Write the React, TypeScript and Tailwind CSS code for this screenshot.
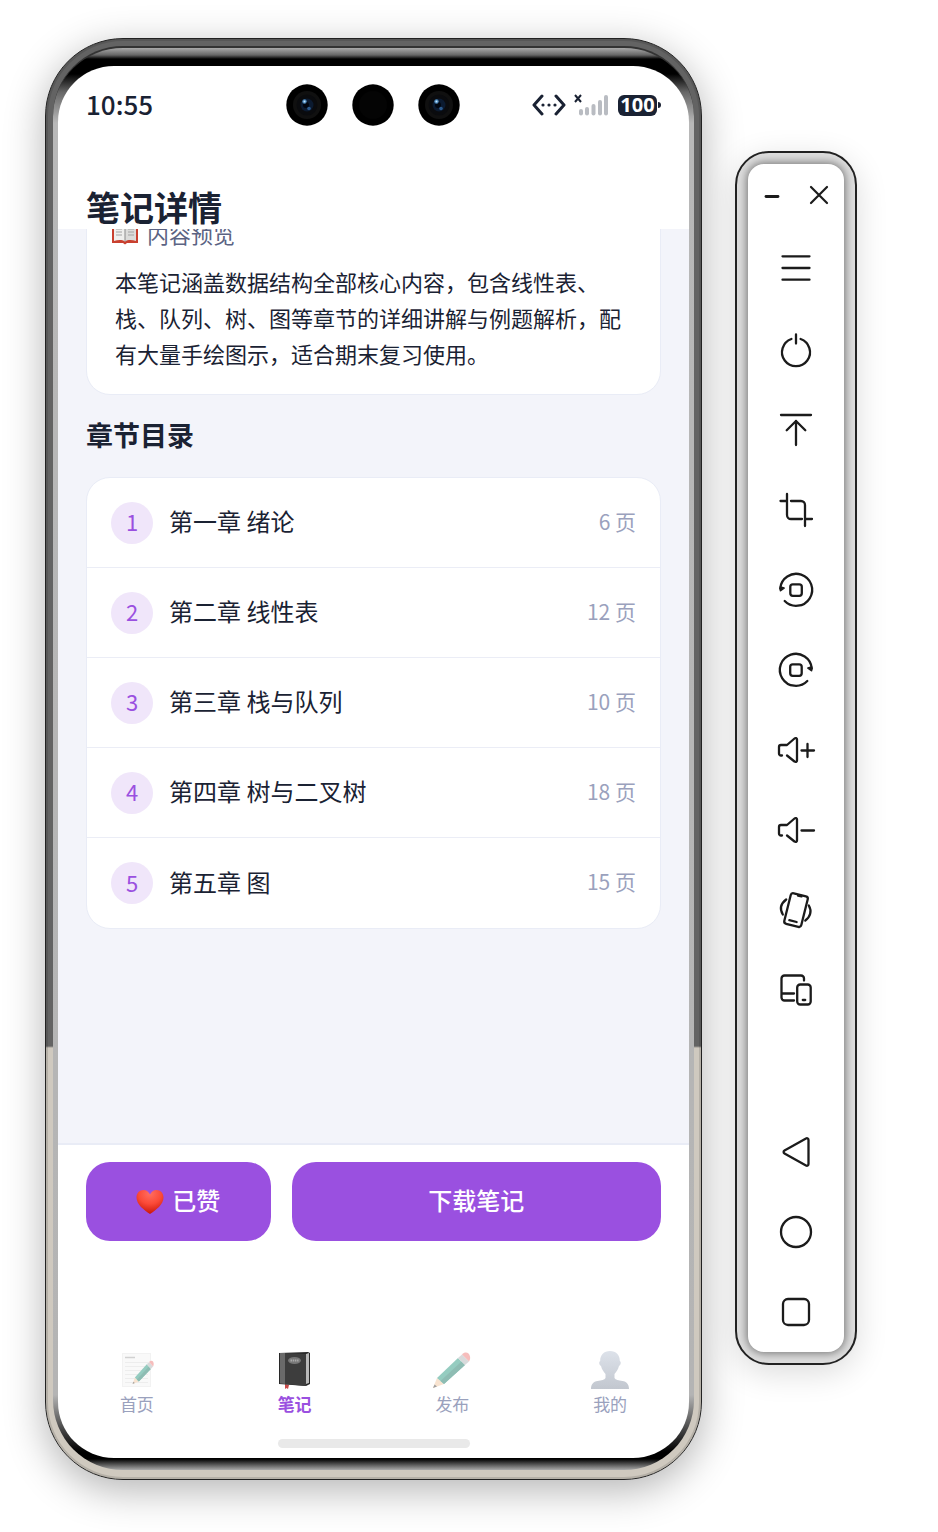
import React from "react";

const chapters = [
  { title: "第一章 绪论", pages: 6 },
  { title: "第二章 线性表", pages: 12 },
  { title: "第三章 栈与队列", pages: 10 },
  { title: "第四章 树与二叉树", pages: 18 },
  { title: "第五章 图", pages: 15 },
];

function Camera({ lens }: { lens?: boolean }) {
  return (
    <svg width="42" height="42" viewBox="0 0 42 42" aria-hidden="true">
      <circle cx="21" cy="21" r="20.7" fill="#000" />
      <circle cx="21" cy="21" r="14" fill={lens ? "#101010" : "#040404"} />
      {lens && (
        <>
          <circle cx="21" cy="21" r="10.5" fill="#0a0b0e" />
          <circle cx="21" cy="21" r="6.5" fill="#0b1a30" />
          <circle cx="20" cy="21" r="3" fill="#02060f" />
          <circle cx="18.5" cy="17.5" r="2.2" fill="#4a86b8" />
          <circle cx="18.5" cy="17.5" r="1" fill="#c4e6ff" />
          <circle cx="23" cy="24.5" r="1.8" fill="#2b5a8e" />
        </>
      )}
    </svg>
  );
}

function StatusIcons() {
  return (
    <div className="flex items-center">
      <svg width="34" height="22" viewBox="0 0 34 22" aria-hidden="true">
        <path
          d="M10 2 2 11l8 9M24 2l8 9-8 9"
          fill="none"
          stroke="#1a2233"
          strokeWidth="3"
          strokeLinecap="round"
          strokeLinejoin="round"
        />
        <circle cx="11" cy="11" r="1.6" fill="#1a2233" />
        <circle cx="17" cy="11" r="1.6" fill="#1a2233" />
        <circle cx="23" cy="11" r="1.6" fill="#1a2233" />
      </svg>
      <svg
        width="36"
        height="22"
        viewBox="0 0 36 22"
        className="ml-2"
        aria-hidden="true"
      >
        <path d="m1 1 6 7M7 1 1 8" stroke="#1a2233" strokeWidth="2" />
        <g fill="#b9bcc2">
          <rect x="5" y="15" width="4" height="6.5" rx="2" />
          <rect x="11" y="13" width="4" height="8.5" rx="2" />
          <rect x="17.5" y="10" width="4" height="11.5" rx="2" />
          <rect x="24" y="6" width="4" height="15.5" rx="2" />
          <rect x="30" y="1" width="4" height="20.5" rx="2" />
        </g>
      </svg>
      <span className="ml-2 flex h-[21px] w-[39px] items-center justify-center rounded-md bg-[#1a2233] font-['Noto_Sans'] text-xl leading-none font-bold text-white">
        100
      </span>
      <span className="ml-px h-1.5 w-[3px] rounded-r-full bg-[#1a2233]" />
    </div>
  );
}

function BookIcon() {
  return (
    <svg width="28" height="24" viewBox="0 0 28 24" aria-hidden="true">
      <path d="M1 3h26v19H16l-2 1.5-2-1.5H1z" fill="#c9402f" />
      <path d="M3 1c4-.8 8-.5 11 1.5v18C11 18.500 7 18.800 3 20z" fill="#efefed" />
      <path d="M25 1c-4-.8-8-.5-11 1.5v18c3-2 7-1.700 11-.5z" fill="#dcdcda" />
      <path
        d="M5 5h6M5 8h6M5 11h6M5 14h6M17 5h6M17 8h6M17 11h6M17 14h6"
        stroke="#a3a3a3"
        strokeWidth="1.2"
      />
      <path d="M14 2.500v18" stroke="#8b8b8b" />
    </svg>
  );
}

function HeartIcon() {
  return (
    <svg width="28" height="26" viewBox="0 0 28 26" aria-hidden="true">
      <defs>
        <radialGradient id="heart" cx="50%" cy="15%" r="85%">
          <stop offset="0" stopColor="#ff6e60" />
          <stop offset=".5" stopColor="#fb4a38" />
          <stop offset="1" stopColor="#c9160a" />
        </radialGradient>
      </defs>
      <path
        d="M14 25C8 21 .5 15.500.5 8.500.5 4 3.500 1 7.500 1c3 0 5.300 1.800 6.500 4.500C15.200 2.800 17.500 1 20.500 1c4 0 7 3 7 7.500 0 7-7.500 12.500-13.500 16.500z"
        fill="url(#heart)"
      />
    </svg>
  );
}

function Pencil() {
  return (
    <g>
      <path d="M1 38 5 28l7 6z" fill="#f3c9a2" />
      <path d="m1 38 1.500-3.500L5 36.500z" fill="#444" />
      <path d="M5 28 26 8l7 7-21 19z" fill="#2d9a83" />
      <path d="m8.500 31 21-19.500L33 15 12 34z" fill="#1f7c69" />
      <path d="m26 8 4-3.500 7 7L33 15z" fill="#b3b7b9" />
      <path d="M30 4.500c2-2.500 5-2.500 6.500-1S39 8.500 37 11.500z" fill="#ee7e7c" />
    </g>
  );
}

function HomeIcon() {
  return (
    <svg width="40" height="40" viewBox="0 0 40 40" className="opacity-50">
      <rect x="5.5" y="3.5" width="28" height="33" fill="#f4f4f4" stroke="#e6e6e6" />
      <path d="M8 7.500h10" stroke="#a5a5a5" strokeWidth="1.5" />
      <path
        d="M8 12.500h23M8 16.500h23M8 20.500h23M8 24.500h23M8 28.500h23M8 32.500h23"
        stroke="#dcdcdc"
      />
      <g transform="translate(15 9) scale(.57 .66)">
        <Pencil />
      </g>
    </svg>
  );
}

function NotesIcon() {
  return (
    <svg width="40" height="40" viewBox="0 0 40 40">
      <path d="m10 34 4 1-1 4-1.500-1-1.500 1z" fill="#c94a49" />
      <path d="M4 3 33 2l2 1v31l-4 2-27-2z" fill="#282828" />
      <path d="m31 4 3-1v30l-3 1z" fill="#b9b9b9" />
      <path d="M5 3h5v31l-5-.5z" fill="#6a6a6a" />
      <path d="m10 3 21 1v32l-21-2z" fill="#3d3d3d" />
      <ellipse cx="19.5" cy="10.5" rx="6.5" ry="3.5" fill="#777" />
      <path d="M15.500 10.500h8" stroke="#aaa" strokeWidth="2" strokeDasharray="1.500 .7" />
    </svg>
  );
}

function PublishIcon() {
  return (
    <svg width="40" height="40" viewBox="0 0 40 40" className="opacity-50">
      <Pencil />
    </svg>
  );
}

function ProfileIcon() {
  return (
    <svg width="40" height="40" viewBox="0 0 40 40">
      <defs>
        <linearGradient id="person" x1="0" y1="0" x2="0" y2="1">
          <stop offset="0" stopColor="#dde2ea" />
          <stop offset="1" stopColor="#c2c7cf" />
        </linearGradient>
      </defs>
      <path
        d="M20 1c6 0 10 4 9.800 10 1.700 1 1 4-.8 5-1 4-3 6-4.500 8v4c1 2 4 2.500 8 3 4 .7 6.500 3 6.500 8H1c0-5 2.500-7.300 6.500-8 4-.5 7-1 8-3v-4c-1.500-2-3.500-4-4.500-8-1.800-1-2.500-4-.8-5C10 5 14 1 20 1z"
        fill="url(#person)"
      />
    </svg>
  );
}

const tabs = [
  { label: "首页", Icon: HomeIcon },
  { label: "笔记", Icon: NotesIcon, active: true },
  { label: "发布", Icon: PublishIcon },
  { label: "我的", Icon: ProfileIcon },
];

const rotateShape = (
  <>
    <path d="M8.700 31A16 16 0 1 0 4.200 18.500" />
    <path d="M4.500 17v3.500l3.500-2.500z" fill="currentColor" strokeWidth="1.800" />
    <rect x="14.3" y="14.3" width="11.5" height="11.5" rx="2.5" />
  </>
);

const speakerShape = (
  <path d="M6 25.500H5a2 2 0 0 1-2-2V17a2 2 0 0 1 2-2h6l7.500-6.500c1-.9 2.500-.3 2.500 1v21c0 1.300-1.500 1.900-2.500 1l-7.500-6" />
);

const deviceActions = [
  { label: "菜单", shape: <path d="M6.500 6.300h27M6.500 18h27M6.500 29.700h27" /> },
  {
    label: "电源",
    shape: <path d="M15.400 9A14 14 0 1 0 24.600 9M20 4.500V13.500" />,
  },
  {
    label: "置顶",
    shape: <path d="M5 5h30M20 35V11M10.700 20.300 20 11l9.300 9.300" />,
  },
  {
    label: "截图",
    shape: (
      <path d="M11 4v21a4 4 0 0 0 4 4h11M30.500 29H36M29 36V15a4 4 0 0 0-4-4H15M4.500 11H10" />
    ),
  },
  { label: "向左旋转", shape: rotateShape },
  {
    label: "向右旋转",
    shape: <g transform="matrix(-1 0 0 1 40 0)">{rotateShape}</g>,
  },
  {
    label: "增大音量",
    shape: (
      <>
        {speakerShape}
        <path d="M25.500 20.500H38M31.500 14v13" />
      </>
    ),
  },
  {
    label: "减小音量",
    shape: (
      <>
        {speakerShape}
        <path d="M25.500 20.500H38" />
      </>
    ),
  },
  {
    label: "摇一摇",
    shape: (
      <>
        <g transform="rotate(14 20 20)">
          <rect x="11.3" y="4.3" width="17.5" height="31.5" rx="2.5" />
          <path d="M16 31.500h7.500M18.500 5.500h3.500" />
        </g>
        <path d="M10.200 9.500C5 13.500 3.500 19 6.800 24.500M32.800 15.500c3.300 5.500 1.500 11.500-3.500 15" />
      </>
    ),
  },
  {
    label: "多设备",
    shape: (
      <>
        <path d="M18 30.500H8.500a3 3 0 0 1-3-3v-19a3 3 0 0 1 3-3H25a3 3 0 0 1 3 3v2M5.500 23.500H18" />
        <rect x="21.2" y="14.5" width="13.5" height="20" rx="3" />
        <path d="M26.800 30h2.400" />
      </>
    ),
  },
];

const navActions = [
  {
    label: "返回",
    shape: (
      <path d="M30 6.500 8.500 18.500c-1.200.7-1.200 2.300 0 3L30 33.500c1.200.7 2.500 0 2.500-1.500V8c0-1.500-1.300-2.200-2.500-1.500z" />
    ),
  },
  { label: "主屏幕", shape: <circle cx="20" cy="20" r="15" /> },
  { label: "最近任务", shape: <rect x="7" y="7" width="26" height="26" rx="5" /> },
];

function ToolButton({
  label,
  shape,
}: {
  label: string;
  shape: React.ReactNode;
}) {
  return (
    <button
      type="button"
      aria-label={label}
      className="flex h-20 items-center justify-center text-[#1b1b1b]"
    >
      <svg
        width="40"
        height="40"
        viewBox="0 0 40 40"
        fill="none"
        stroke="currentColor"
        strokeWidth="2.3"
        strokeLinecap="round"
        strokeLinejoin="round"
      >
        {shape}
      </svg>
    </button>
  );
}

function Toolbar() {
  return (
    <aside className="mt-[113px] w-[122px] shrink-0 rounded-[34px] border-2 border-[#222] bg-[#dedede] p-[11px] shadow-[0_8px_32px_rgba(0,0,0,0.14)]">
      <div className="flex flex-col rounded-2xl bg-white shadow-[0_0_10px_1px_rgba(0,0,0,0.5)]">
        <div className="flex h-[66px] items-center justify-between pr-[15px] pb-1 pl-3.5 text-[#1b1b1b]">
          <button type="button" aria-label="最小化">
            <svg width="20" height="20" viewBox="0 0 20 20">
              <path
                d="M4 11.500h12"
                stroke="currentColor"
                strokeWidth="2.8"
                strokeLinecap="round"
              />
            </svg>
          </button>
          <button type="button" aria-label="关闭">
            <svg width="20" height="20" viewBox="0 0 20 20">
              <path
                d="m2 2 16 16M18 2 2 18"
                stroke="currentColor"
                strokeWidth="2.2"
                strokeLinecap="round"
              />
            </svg>
          </button>
        </div>
        {deviceActions.map((a) => (
          <ToolButton key={a.label} {...a} />
        ))}
        <div className="h-[82px]" />
        {navActions.map((a) => (
          <ToolButton key={a.label} {...a} />
        ))}
      </div>
    </aside>
  );
}

function NoteDetail() {
  return (
    <div className="flex flex-col overflow-hidden rounded-[56px] bg-white">
      {/* Status bar */}
      <div className="grid h-[78px] grid-cols-3 items-center px-7">
        <span className="pb-1 text-[26px] font-medium text-[#1a2233]">
          10:55
        </span>
        <div className="flex justify-center gap-6">
          <Camera lens />
          <Camera />
          <Camera lens />
        </div>
        <div className="flex justify-end">
          <StatusIcons />
        </div>
      </div>

      <header className="flex h-[85px] items-end px-7">
        <h1 className="text-[34px] leading-[44px] font-bold text-[#1a2233]">
          笔记详情
        </h1>
      </header>

      {/* Scrolled content */}
      <main className="h-[914px] overflow-hidden bg-[#f3f4fa] px-7">
        <section className="-mt-9 rounded-3xl border border-[#e9ecf6] bg-white px-6 pt-6 pb-[23px]">
          <h2 className="flex items-center gap-2 text-[22px] leading-[30px] text-[#5b6383]">
            <BookIcon />
            内容预览
          </h2>
          <p className="mt-[15px] px-1 text-[22px] leading-9 text-[#1a2233]">
            本笔记涵盖数据结构全部核心内容，包含线性表、栈、队列、树、图等章节的详细讲解与例题解析，配有大量手绘图示，适合期末复习使用。
          </p>
        </section>

        <h2 className="mt-5 text-[27px] leading-10 font-bold text-[#1a2233]">
          章节目录
        </h2>
        <ol className="mt-[22px] rounded-3xl border border-[#e9ecf6] bg-white">
          {chapters.map((chapter, i) => (
            <li
              key={chapter.title}
              className="flex h-[90px] items-center border-b border-[#ebedf6] px-6 last:border-b-0"
            >
              <span className="flex size-[42px] items-center justify-center rounded-full bg-[#f0e6fa] pb-0.5 text-[22px] text-[#9a50e0]">
                {i + 1}
              </span>
              <span className="ml-4 pb-[3px] text-2xl text-[#1a2233]">
                {chapter.title}
              </span>
              <span className="ml-auto pb-0.5 text-[21px] text-[#9aa1bd]">
                {chapter.pages} 页
              </span>
            </li>
          ))}
        </ol>
      </main>

      <div className="flex gap-[21px] border-t-2 border-[#e9ecf6] bg-white px-7 pt-[17px] text-2xl font-medium text-white">
        <button
          type="button"
          className="flex h-[79px] flex-1 items-center justify-center gap-2 rounded-3xl bg-[#9a50e0]"
        >
          <HeartIcon />
          <span className="pb-1">已赞</span>
        </button>
        <button
          type="button"
          className="h-[79px] flex-2 rounded-3xl bg-[#9a50e0] pb-1"
        >
          下载笔记
        </button>
      </div>

      <nav className="mt-[109px] grid grid-cols-4">
        {tabs.map(({ label, Icon, active }) => (
          <button
            key={label}
            type="button"
            className={
              active
                ? "flex flex-col items-center gap-0.5 text-[17px] leading-6 font-bold text-[#9a50e0]"
                : "flex flex-col items-center gap-0.5 text-[17px] leading-6 text-[#9aa1bd]"
            }
          >
            <Icon />
            {label}
          </button>
        ))}
      </nav>
      <div className="mx-auto mt-[23px] mb-[10px] h-[9px] w-48 rounded-full bg-[#e9e9e9]" />
    </div>
  );
}

export default function App() {
  return (
    <div className="flex min-h-screen items-start gap-[33px] bg-white pt-[38px] pr-[81px] pb-[54px] pl-[45px] font-['Noto_Sans_CJK_SC',sans-serif]">
      {/* Phone body: metal rim, then the glossy bezel */}
      <div className="min-w-0 flex-1 rounded-[78px] border border-[#222] bg-[linear-gradient(#636363_0,#636363_1007px,#cfc9bf_1009px)] px-[7px] pt-[7px] pb-[9px] shadow-[0_10px_40px_rgba(0,0,0,0.3),inset_0_0_0_2px_rgba(0,0,0,0.12)]">
        <div className="rounded-[70px] border-t-2 border-t-[#333] bg-[linear-gradient(#aaa_0,#666_7px,#000_11px,#000_26px,#666_44px,#b8b8b8_75px,#b4b4b4_calc(100%-75px),#444_calc(100%-40px),#000_calc(100%-18px),#000_calc(100%-11px),#aaa_100%)] px-[5px] pt-[18px] pb-3">
          <NoteDetail />
        </div>
      </div>
      <Toolbar />
    </div>
  );
}
